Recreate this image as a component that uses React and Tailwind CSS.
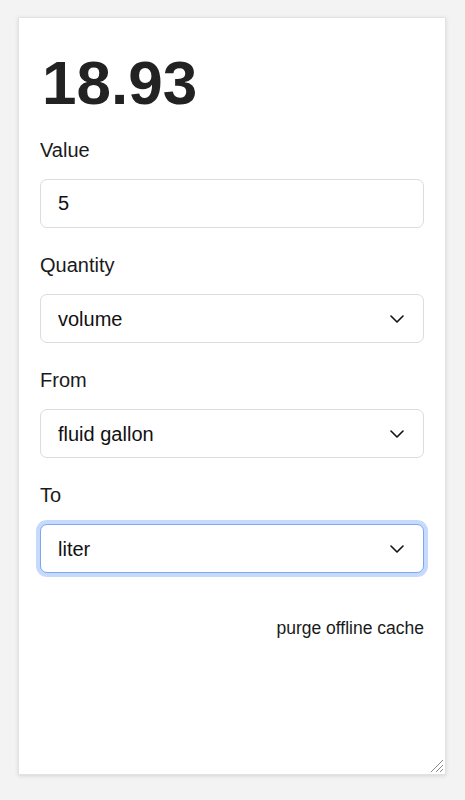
import React from "react";

function Chevron() {
  return (
    <svg
      className="pointer-events-none absolute right-[20px] top-1/2 -translate-y-1/2"
      width="14"
      height="9"
      viewBox="0 0 14 9"
      fill="none"
    >
      <path d="M1 1.5L7 7.5L13 1.5" stroke="#111" strokeWidth="1.6" strokeLinecap="round" strokeLinejoin="round" />
    </svg>
  );
}

function Field({ label, children }) {
  return (
    <div className="flex flex-col gap-[17px]">
      <label className="text-[20px] leading-[24px] text-[#1a1a1a]">{label}</label>
      {children}
    </div>
  );
}

function Select({ value, options, focused }) {
  return (
    <div className="relative">
      <select
        defaultValue={value}
        className={
          "h-[49px] w-full appearance-none rounded-[7px] bg-white pl-[17px] pr-10 text-[20px] text-[#111] outline-none " +
          (focused
            ? "border border-[#7ea6f2] shadow-[0_0_0_4px_#c6dafb]"
            : "border border-[#dcdcdc]")
        }
        style={{ fontFamily: "inherit" }}
      >
        {options.map((o) => (
          <option key={o} value={o}>
            {o}
          </option>
        ))}
      </select>
      <Chevron />
    </div>
  );
}

export default function App() {
  return (
    <div
      className="min-h-[800px] w-full bg-[#f3f3f3] pt-[17px]"
      style={{ fontFamily: '"Liberation Sans", Arial, sans-serif' }}
    >
      <div className="relative ml-[18px] flex h-[758px] w-[428px] flex-col border border-[#e2e2e2] bg-white px-[21px] pt-[33px] shadow-[0_1px_4px_rgba(0,0,0,0.12)]">
        <h1 className="pl-[2px] text-[62px] font-bold leading-[63px] text-[#222]">18.93</h1>
        <div className="mt-[24px] flex flex-col gap-[25px]">
          <Field label="Value">
            <input
              defaultValue="5"
              className="h-[49px] w-full rounded-[7px] border border-[#dcdcdc] bg-white pl-[17px] text-[20px] text-[#111] outline-none"
            />
          </Field>
          <Field label="Quantity">
            <Select value="volume" options={["volume", "length", "mass"]} />
          </Field>
          <Field label="From">
            <Select value="fluid gallon" options={["fluid gallon", "liter"]} />
          </Field>
          <Field label="To">
            <Select value="liter" options={["liter", "fluid gallon"]} focused />
          </Field>
        </div>
        <div className="mt-[45px] flex justify-end">
          <span className="text-[17.5px] leading-[21px] text-[#1a1a1a]">purge offline cache</span>
        </div>
        <svg className="absolute bottom-[1px] right-[1px]" width="16" height="16" viewBox="0 0 16 16">
          <path d="M15 3L3 15M15 8L8 15M15 12L12 15" stroke="#8a8a8a" strokeWidth="1" />
        </svg>
      </div>
    </div>
  );
}
